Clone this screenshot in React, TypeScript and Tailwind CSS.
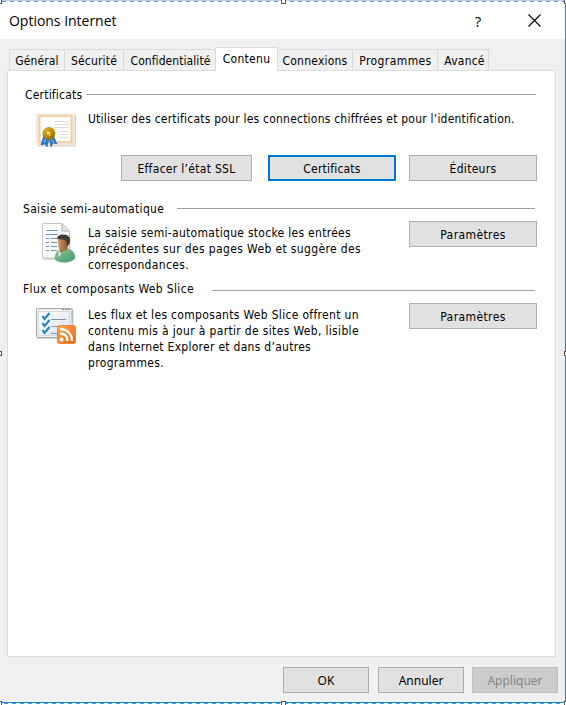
import type { ReactNode } from 'react';

const ui = "font-['DejaVu_Sans_Condensed','DejaVu_Sans',sans-serif] [font-stretch:condensed]";

function CertificateIcon() {
  return (
    <svg width="42" height="36" viewBox="0 0 42 36">
      <defs>
        <radialGradient id="gold" cx=".4" cy=".35" r=".65">
          <stop offset="0" stopColor="#fff0a0" />
          <stop offset=".4" stopColor="#d9a514" />
          <stop offset="1" stopColor="#996900" />
        </radialGradient>
      </defs>
      <rect x="1.5" y="1.5" width="38.5" height="32" rx="1.5" fill="#d6cfc8" />
      <rect x="0" y="0.5" width="39" height="32" rx="1" fill="#f1e6da" />
      <rect x="3.5" y="3" width="32" height="26" fill="#fff" stroke="#f3d9b4" strokeWidth="2.2" />
      <rect x="3.5" y="3" width="32" height="26" fill="none" stroke="#e8bd80" strokeWidth=".8" strokeDasharray="1 1" />
      <path d="M18 8.5h15M18 11.5h15M18 14.5h15M23 18.5h10M23 21.5h10M23 24.5h10" stroke="#dcdce0" />
      <path d="M8 22 5 32l4-1 2 3 3-11zM13 23l2 11 2-4 4 1-4-9z" fill="#2878ca" stroke="#15559c" strokeWidth=".5" />
      <path d="m10 25-2 5m7-4 3 4" stroke="#8fcdf5" />
      <circle cx="13" cy="20.5" r="6" fill="url(#gold)" stroke="#a77600" strokeWidth=".7" />
      <circle cx="13" cy="20.5" r="3.2" fill="#dbac28" stroke="#a87804" />
      <circle cx="12" cy="19.5" r="1.3" fill="#ffed91" />
    </svg>
  );
}

function PersonIcon() {
  return (
    <svg width="34" height="40" viewBox="0 0 34 40">
      <defs>
        <linearGradient id="skin"><stop stopColor="#d29a62" /><stop offset="1" stopColor="#8f522e" /></linearGradient>
        <linearGradient id="shirt" x2="1" y2="1"><stop stopColor="#8cc89f" /><stop offset="1" stopColor="#439768" /></linearGradient>
      </defs>
      <path d="M1.5 2h21l6 7v28h-27z" fill="#ddd" />
      <path d="M.5.5h20l7 7.5v27H.5z" fill="#fafafa" stroke="#c4c4c4" />
      <path d="M20 1v7h7" fill="#e5e5e5" stroke="#aaa" />
      <path d="M4 7.5h12M4 11.5h12M4 15.5h3m2 0h6M4 19.5h3m2 0h6M4 23.5h3m2 0h6M4 27.5h3m2 0h6" stroke="#6d93bf" strokeWidth="1.1" />
      <path d="M13 36c0-5 2-8 5-9l8-1c5 1 7 5 7 9-3 5-17 6-20 1z" fill="url(#shirt)" stroke="#519771" strokeWidth=".5" />
      <path d="m17 23 1 7 8-4-1-6h-8z" fill="#a96b3d" />
      <path d="M16 15h10v7c-1 4-4 6-7 5-3-1-3-7-3-12z" fill="url(#skin)" />
      <path d="M15.500 16c-1-3 2-4.500 6-4.500 5 0 7 3 6.500 7-.5 3-1.500 4-2.500 4.500l-1.500-5.500c-2-1-5.500-1-8.500-1.500z" fill="#413a34" />
      <path d="m17 27 2 4-2.500 3z" fill="#edf7f0" />
    </svg>
  );
}

function FeedIcon() {
  return (
    <svg width="41" height="37" viewBox="0 0 41 37">
      <defs>
        <linearGradient id="pane" x2="1" y2="1"><stop stopColor="#fff" /><stop offset="1" stopColor="#dce0ed" /></linearGradient>
        <linearGradient id="feed" x2="1" y2="1"><stop stopColor="#ffab54" /><stop offset="1" stopColor="#e8630b" /></linearGradient>
      </defs>
      <rect x="1" y="1" width="36.5" height="30" rx="1" fill="#cfd1d3" />
      <rect x=".5" y=".5" width="35.500" height="29" rx="1" fill="#edf0f1" stroke="#a0a8ac" />
      <path d="M26 1.500h2m1 0h2m1 0h2" stroke="#87949c" />
      <rect x="2.500" y="3.500" width="31" height="24" fill="url(#pane)" stroke="#d5dadd" />
      <path d="M15 11.500h15M15 18.500h15M15 25.500h7" stroke="#8a8fae" />
      <path d="m6.500 8 2 3 5-6M6.500 15l2 3 5-6M6.500 22l2 3 5-6" fill="none" stroke="#2586bd" strokeWidth="2.200" />
      <rect x="21.500" y="17.500" width="18" height="18" rx="2" fill="url(#feed)" stroke="#ed7927" strokeWidth=".8" />
      <circle cx="25.500" cy="31.500" r="2" fill="#fff" />
      <path d="M24 25.500c5 0 7.500 3 7.500 7.500M24 21c7 0 12 5 12 12" fill="none" stroke="#fff" strokeWidth="2.300" />
    </svg>
  );
}

function Button({ children, className = '' }: { children: ReactNode; className?: string }) {
  return <button className={`h-[26px] shrink-0 whitespace-nowrap border border-[#adadad] bg-[#e1e1e1] text-center leading-6 ${className}`}>{children}</button>;
}

const tabs = [
  { label: 'Général', box: 'w-[56px] border-l tracking-[0.1px]' },
  { label: 'Sécurité', box: 'w-[59px] tracking-[0.2px]' },
  { label: 'Confidentialité', box: 'w-[91px] border-r-0 pl-[2px] tracking-[0.07px]' },
  { label: 'Contenu', box: '' },
  { label: 'Connexions', box: 'w-[75px] tracking-[0.22px]' },
  { label: 'Programmes', box: 'w-[85px] pl-px tracking-[0.4px]' },
  { label: 'Avancé', box: 'w-[51px] pl-[3px] tracking-[0.2px]' },
];

function Handle({ className }: { className: string }) {
  return <span className={`absolute border border-[#555] bg-white ${className}`} />;
}

export default function App() {
  return (
    <main className={`relative flex h-[705px] w-[566px] flex-col overflow-hidden bg-[#f0f0f0] text-[12px] leading-4 text-black ${ui}`}>
      <header className="flex h-[39px] shrink-0 items-center bg-white pt-[2px] pr-px pl-[9px] font-['Open_Sans',sans-serif] text-[14px] [font-stretch:normal]">
        <h1 className="flex-1 tracking-[-0.02px]">Options Internet</h1>
        <button className="w-[14px] text-[15px]" aria-label="Aide">?</button>
        <button className="mr-[24px] ml-[43px]" aria-label="Fermer">
          <svg width="13" height="13" viewBox="0 0 13 13"><path d="m.5.5 12 12m0-12-12 12" stroke="#000" strokeWidth="1.1" /></svg>
        </button>
      </header>

      <nav className="mt-2 ml-[9px] flex h-[24px] shrink-0 items-end">
        {tabs.map(({ label, box }) => label === 'Contenu' ? (
          <button key={label} className="z-10 h-[24px] w-[63px] border border-b-0 border-[#d9d9d9] bg-white pb-[2px] tracking-[0.3px]">{label}</button>
        ) : (
          <button key={label} className={`h-[22px] whitespace-nowrap border-t border-r border-b border-[#d9d9d9] pt-px ${box}`}>{label}</button>
        ))}
      </nav>

      <section className="-mt-px ml-[7px] h-[587px] w-[549px] shrink-0 border border-[#dcdcdc] bg-white tracking-[0.34px]">
        <div className="h-[115px] pt-4">
          <div className="flex h-4 items-start pl-[17px]">
            <h2 className="w-[61px] whitespace-nowrap tracking-[0.2px]">Certificats</h2>
            <hr className="mt-[7px] w-[450px] border-[#a0a0a0]" />
          </div>
          <div className="flex pt-[7px] pl-[28px]">
            <div className="h-[45px] w-[52px] pt-[3px]"><CertificateIcon /></div>
            <p className="pt-px whitespace-nowrap tracking-[0.22px]">Utiliser des certificats pour les connections chiffrées et pour l’identification.</p>
          </div>
          <div className="flex pl-[113px]">
            <Button className="w-[131px] pt-px tracking-[0.3px]">Effacer l’état SSL</Button>
            <Button className="ml-4 w-[128px] border-2 !border-[#0078d7] pt-px leading-[22px] tracking-[0.2px]">Certificats</Button>
            <Button className="ml-[13px] w-[128px] pt-px tracking-[0.3px]">Éditeurs</Button>
          </div>
        </div>

        <div className="h-[80px] pt-[15px]">
          <div className="flex h-4 pl-[15px]">
            <h2 className="w-[154px] whitespace-nowrap tracking-[0.32px]">Saisie semi-automatique</h2>
            <hr className="mt-[7px] w-[358px] border-[#a0a0a0]" />
          </div>
          <div className="flex pt-[4px]">
            <div className="w-[80px] pt-[2px] pl-[34px]"><PersonIcon /></div>
            <p className="w-[321px] pt-[4px] whitespace-nowrap"><span className="tracking-[0.29px]">La saisie semi-automatique stocke les entrées</span><br /><span className="tracking-[0.37px]">précédentes sur des pages Web et suggère des</span><br />correspondances.</p>
            <Button className="w-[128px] pt-px tracking-[0.4px]">Paramètres</Button>
          </div>
        </div>

        <div className="pt-[15px]">
          <div className="flex h-4 pl-[15px]">
            <h2 className="w-[189px] whitespace-nowrap">Flux et composants Web Slice</h2>
            <hr className="mt-[9px] w-[323px] border-[#a0a0a0]" />
          </div>
          <div className="flex pt-[6px]">
            <div className="w-[80px] pt-[5px] pl-[28px]"><FeedIcon /></div>
            <p className="w-[321px] pt-[4px] whitespace-nowrap"><span className="tracking-[0.32px]">Les flux et les composants Web Slice offrent un</span><br />contenu mis à jour à partir de sites Web, lisible<br /><span className="tracking-[0.28px]">dans Internet Explorer et dans d’autres</span><br />programmes.</p>
            <Button className="w-[128px] pt-px tracking-[0.4px]">Paramètres</Button>
          </div>
        </div>
      </section>

      <footer className="flex pt-[10px] pl-[283px] font-['Noto_Sans',sans-serif] [font-stretch:normal]">
        <Button className="w-[86px] pt-px">OK</Button>
        <Button className="ml-[9px] w-[86px] pt-px">Annuler</Button>
        <Button className="ml-2 w-[86px] !border-[#bfbfbf] !bg-[#cccccc] pt-px text-[#858585]">Appliquer</Button>
      </footer>

      <div className="absolute top-0 right-0 h-full w-px bg-[#1683d8]" />
      <div className="absolute top-0 left-0 h-px w-full bg-[#ccccda]" />
      <div className="absolute top-px left-[2px] h-px w-full bg-[repeating-linear-gradient(90deg,#3b98f5_0_4px,#fff_4px_8px)]" />
      <div className="absolute top-[702px] left-0 h-px w-full bg-[#1683d8]" />
      <div className="absolute top-[703px] left-0 h-px w-full bg-[repeating-linear-gradient(90deg,#fff_0_4px,#3b98f5_4px_8px)]" />
      <div className="absolute top-[704px] left-0 h-px w-full bg-white" />
      <Handle className="-top-[1px] -left-[3px] size-[5px]" />
      <Handle className="-top-[1px] left-[281px] size-[5px]" />
      <Handle className="-top-[1px] left-[564px] size-[5px]" />
      <Handle className="top-[351px] -left-[3px] size-[5px]" />
      <Handle className="top-[351px] left-[564px] size-[5px]" />
      <Handle className="top-[701px] -left-[3px] size-[5px]" />
      <Handle className="top-[701px] left-[281px] size-[5px]" />
      <Handle className="top-[701px] left-[564px] size-[5px]" />
    </main>
  );
}
